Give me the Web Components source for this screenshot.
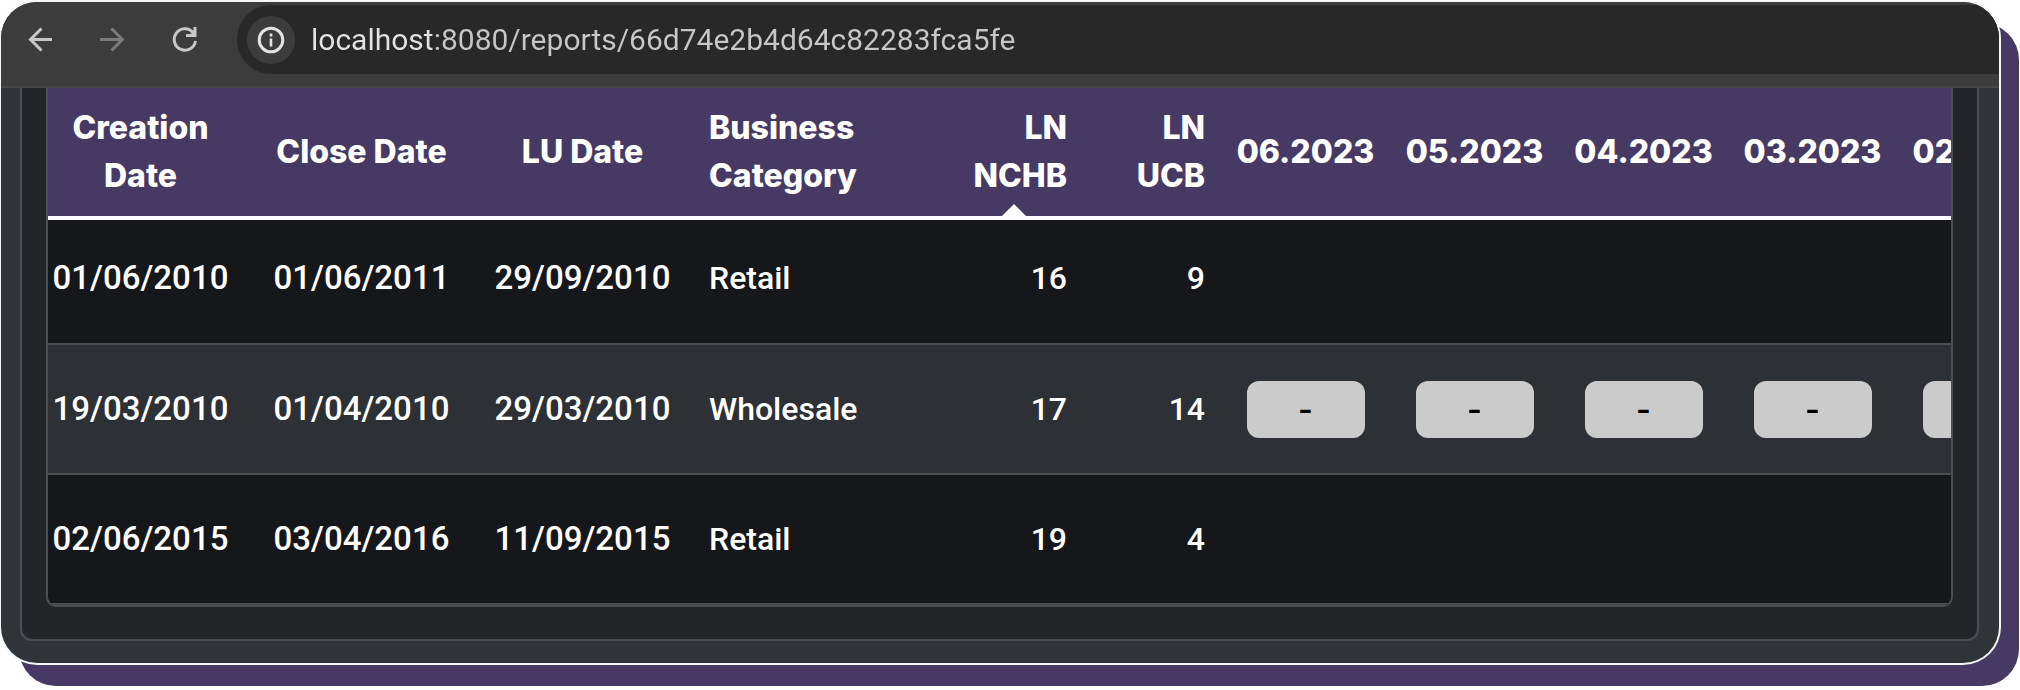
<!DOCTYPE html>
<html lang="en">
<head>
<meta charset="utf-8">
<meta name="viewport" content="width=device-width, initial-scale=1">
<title>Report</title>
<style>
  body { margin: 0; background: #fff; font-family: Roboto, "Liberation Sans", sans-serif; overflow-x: hidden; }
</style>
</head>
<body>
<browser-window>
  <browser-toolbar slot="toolbar" host="localhost" path=":8080/reports/66d74e2b4d64c82283fca5fe"></browser-toolbar>
  <report-card>
    <report-table></report-table>
  </report-card>
</browser-window>

<script>
class BrowserWindow extends HTMLElement {
  constructor() {
    super();
    this.attachShadow({ mode: 'open' }).innerHTML = `
      <style>
        :host {
          display: block; margin: 2px 21px 27px 1px; border-radius: 36px;
          background: #303338; overflow: hidden;
          box-shadow: 0 0 0 2px #f4f8f8, 19px 22px 0 1px #463a64;
        }
        main { padding: 0 20px 22px 19px; }
      </style>
      <slot name="toolbar"></slot>
      <main><slot></slot></main>`;
  }
}

class BrowserToolbar extends HTMLElement {
  constructor() {
    super();
    this.attachShadow({ mode: 'open' }).innerHTML = `
      <style>
        :host {
          display: flex; align-items: flex-start; box-sizing: border-box; height: 86px;
          padding: 3px 0 0 15px; background: #3c3c3c; border-bottom: 2px solid #474747; color: #c7c7c7;
        }
        button { padding: 0; border: 0; background: none; color: inherit; display: grid; place-items: center; }
        nav { display: flex; gap: 24px; padding-top: 10px; margin-right: 29px; }
        nav button { width: 48px; height: 48px; }
        nav button:disabled { color: #7b7b7b; }
        svg { display: block; fill: none; stroke: currentColor; stroke-width: 3; }
        form {
          flex: 1; display: flex; align-items: center; gap: 16px; box-sizing: border-box;
          height: 69px; padding-left: 10px; background: #282828; border-radius: 34px 0 0 34px;
        }
        .info { width: 48px; height: 48px; border-radius: 50%; background: #3c3c3c; color: #e3e3e3; }
        input {
          flex: 1; min-width: 0; height: 48px; padding: 0; border: 0; outline: 0;
          font: 400 30px/48px Roboto, sans-serif; color: #c7c7c7;
          background: linear-gradient(90deg, #e3e3e3 122px, #c7c7c7 122px);
          -webkit-background-clip: text; background-clip: text; -webkit-text-fill-color: transparent;
        }
      </style>
      <nav aria-label="History">
        <button type="button" aria-label="Back"><svg width="28" height="28" viewBox="0 0 28 28"><path d="M26 14.500H4M15.500 3.500L4.500 14.500l11 11"/></svg></button>
        <button type="button" aria-label="Forward" disabled><svg width="28" height="28" viewBox="0 0 28 28"><path d="M2 14.500h22M13.500 3.500l11 11-11 11"/></svg></button>
        <button type="button" aria-label="Reload"><svg width="28" height="28" viewBox="0 0 28 28"><path d="M25.500 16A10.700 10.700 0 1 1 23 7.500L25 9.500M25 2v8.500H16"/><path d="M20 8.500h5V4z" fill="currentColor" stroke="none"/></svg></button>
      </nav>
      <form>
        <button class="info" type="button" aria-label="View site information"><svg width="28" height="28" viewBox="0 0 28 28"><circle cx="14" cy="14" r="11.800"/><path d="M14 12.500v8M14 7.500v3" stroke-width="2.600"/></svg></button>
        <input type="text" aria-label="Address" spellcheck="false">
      </form>`;
  }
  connectedCallback() {
    this.shadowRoot.querySelector('input').value = this.getAttribute('host') + this.getAttribute('path');
  }
}

class ReportCard extends HTMLElement {
  constructor() {
    super();
    this.attachShadow({ mode: 'open' }).innerHTML = `
      <style>
        :host {
          display: block; padding: 0 24px 32px; background: #242529;
          border: 2px solid #4d4e52; border-top: 0; border-radius: 0 0 12px 12px;
        }
      </style>
      <slot></slot>`;
  }
}

class StatusPill extends HTMLElement {
  constructor() {
    super();
    this.attachShadow({ mode: 'open' }).innerHTML = `
      <style>
        :host {
          display: block; width: 118px; height: 57px; margin: 0 auto; border-radius: 12px;
          background: #cbcbcb; color: #000; text-align: center; font: 600 32px/57px Inter, sans-serif;
        }
      </style>
      <slot></slot>`;
  }
}

const MONTHS = ['06.2023', '05.2023', '04.2023', '03.2023', '02.2023'];
const ROWS = [
  { cells: ['01/06/2010', '01/06/2011', '29/09/2010', 'Retail', '16', '9'], months: [] },
  { cells: ['19/03/2010', '01/04/2010', '29/03/2010', 'Wholesale', '17', '14'], months: ['-', '-', '-', '-', '-'] },
  { cells: ['02/06/2015', '03/04/2016', '11/09/2015', 'Retail', '19', '4'], months: [] }
];
const KINDS = ['day', 'day', 'day', 'text', 'num', 'num'];

class ReportTable extends HTMLElement {
  constructor() {
    super();
    const body = ROWS.map(row => `<tr>${
      row.cells.map((c, i) => `<td class="${KINDS[i]}">${c}</td>`).join('')
    }${
      MONTHS.map((m, i) => `<td class="month">${row.months[i] ? `<status-pill>${row.months[i]}</status-pill>` : ''}</td>`).join('')
    }</tr>`).join('');
    this.attachShadow({ mode: 'open' }).innerHTML = `
      <style>
        :host {
          display: block; overflow: hidden; background: #16171b; color: #fff;
          border: 2px solid #4d4e52; border-top: 0; border-radius: 0 0 10px 10px;
        }
        /* the first column is scrolled partly out of view */
        table { width: 2036px; margin-left: -18px; table-layout: fixed; border-collapse: separate; border-spacing: 0; font-size: 32px; line-height: 48px; }
        th, td { box-sizing: border-box; padding: 0 16px; text-align: center; }
        th {
          position: relative; height: 132px; background: #463a64; border-bottom: 4px solid #fff;
          font-family: Inter, sans-serif; font-weight: 800;
        }
        td { height: 130px; border-bottom: 2px solid #4d4e52; font-weight: 500; }
        tr:first-child td { height: 125px; padding-bottom: 8px; }
        tbody tr:nth-child(even) { background: #2d3035; }
        .day { font-size: 33px; }
        .text { text-align: left; }
        .num { text-align: right; }
        .month { padding: 0; }
        .sorted::after {
          content: ""; position: absolute; left: 50%; bottom: 0; margin-left: -12px;
          border: 12px solid transparent; border-top: 0; border-bottom-color: #fff;
        }
        .date { width: 221px; } .category { width: 252px; } .count { width: 138px; } .period { width: 169px; }
      </style>
      <table>
        <colgroup>
          <col class="date" span="3"><col class="category"><col class="count" span="2"><col class="period" span="5">
        </colgroup>
        <thead><tr>
          <th scope="col">Creation Date</th><th scope="col">Close Date</th><th scope="col">LU Date</th>
          <th scope="col" class="text">Business Category</th>
          <th scope="col" class="num sorted" aria-sort="ascending">LN NCHB</th><th scope="col" class="num">LN UCB</th>
          ${MONTHS.map(m => `<th scope="col" class="month">${m}</th>`).join('')}
        </tr></thead>
        <tbody>${body}</tbody>
      </table>`;
  }
}

customElements.define('status-pill', StatusPill);
customElements.define('report-table', ReportTable);
customElements.define('report-card', ReportCard);
customElements.define('browser-toolbar', BrowserToolbar);
customElements.define('browser-window', BrowserWindow);
</script>
</body>
</html>
